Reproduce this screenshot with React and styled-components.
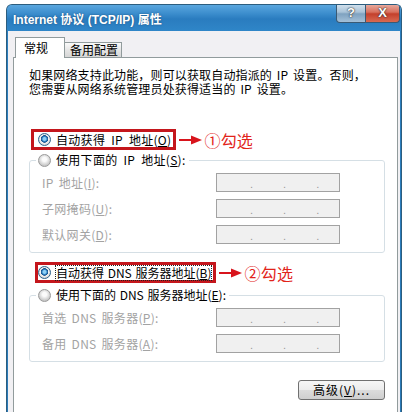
import React from "react";
import styled, { createGlobalStyle } from "styled-components";

const GlobalStyle = createGlobalStyle`
  html, body {
    margin: 0;
    padding: 0;
    background: #ffffff;
    overflow: hidden;
  }
  body {
    font-family: "Noto Sans CJK SC", "Liberation Sans", sans-serif;
    font-size: 12px;
    color: #000;
  }
`;

function App() {
  return (
    <>
      <GlobalStyle />
      <StWindow>
        <StTitleBar>
          <StTitle>Internet 协议 (TCP/IP) 属性</StTitle>
          <StCaptionButtons>
            <StCaptionButton>?</StCaptionButton>
            <StCaptionButton $close>X</StCaptionButton>
          </StCaptionButtons>
        </StTitleBar>

        <StBody>
          {/* 탭 */}
          <StTabs>
            <StTab $active>常规</StTab>
            <StTab>备用配置</StTab>
          </StTabs>

          <StPanel>
            <StIntro>
              <div>如果网络支持此功能，则可以获取自动指派的 IP 设置。否则，</div>
              <div>您需要从网络系统管理员处获得适当的 IP 设置。</div>
            </StIntro>

            {/* IP 주소 */}
            <StMarkRow $top={33}>
              <StHighlight $left={1} $inset={4}>
                <StRadioLabel>
                  <StRadio $checked />
                  <span>
                    自动获得 IP 地址(<u>O</u>)
                  </span>
                </StRadioLabel>
              </StHighlight>
              <Arrow />
              <StNote>①勾选</StNote>
            </StMarkRow>

            <StGroup $top={3}>
              <StLegend>
                <StRadioLabel>
                  <StRadio />
                  <span>
                    使用下面的 IP 地址(<u>S</u>):
                  </span>
                </StRadioLabel>
              </StLegend>
              <StRows>
                <AddressRow label="IP 地址" hotkey="I" />
                <AddressRow label="子网掩码" hotkey="U" />
                <AddressRow label="默认网关" hotkey="D" />
              </StRows>
            </StGroup>

            {/* DNS */}
            <StMarkRow $top={9}>
              <StHighlight $left={5} $inset={0}>
                <StRadioLabel $tight>
                  <StRadio $checked />
                  <StFocus>
                    自动获得 DNS 服务器地址(<u>B</u>)
                  </StFocus>
                </StRadioLabel>
              </StHighlight>
              <Arrow />
              <StNote>②勾选</StNote>
            </StMarkRow>

            <StGroup $top={5}>
              <StLegend>
                <StRadioLabel $tight>
                  <StRadio />
                  <span>
                    使用下面的 DNS 服务器地址(<u>E</u>):
                  </span>
                </StRadioLabel>
              </StLegend>
              <StRows>
                <AddressRow label="首选 DNS 服务器" hotkey="P" />
                <AddressRow label="备用 DNS 服务器" hotkey="A" />
              </StRows>
            </StGroup>

            <StFooter>
              <StButton>
                高级(<u>V</u>)...
              </StButton>
            </StFooter>
          </StPanel>
        </StBody>
      </StWindow>
    </>
  );
}

function AddressRow({ label, hotkey }) {
  return (
    <StRow>
      <StFieldLabel>
        {label}(<u>{hotkey}</u>):
      </StFieldLabel>
      <StAddress>
        <span>.</span>
        <span>.</span>
        <span>.</span>
      </StAddress>
    </StRow>
  );
}

function Arrow() {
  return (
    <StArrow width="24" height="10" viewBox="0 0 24 10">
      <line x1="0" y1="5" x2="13" y2="5" stroke="#d8141c" strokeWidth="2" />
      <polygon points="12,0.5 23,5 12,9.5" fill="#d8141c" />
    </StArrow>
  );
}

export default App;

const StWindow = styled.div`
  margin: 4px 0 0 6px;
  width: 396px;
  height: 420px;
  box-sizing: border-box;
  border: 1px solid #2c5d7e;
  border-bottom: none;
  border-radius: 6px 6px 0 0;
  background: linear-gradient(#4b9ad6, #2b7fc0 20px, #2a7ab8);
  display: flex;
  flex-direction: column;
  overflow: hidden;
`;

const StTitleBar = styled.div`
  height: 26px;
  display: flex;
  align-items: flex-start;
  padding: 0 1px 0 6px;
  background: linear-gradient(
    #5aa6de 0px,
    #3a8ccc 9px,
    #2a7cbf 14px,
    #2f86c8 26px
  );
`;

const StTitle = styled.div`
  margin-top: 8px;
  color: #ffffff;
  font-family: "Liberation Sans", "Noto Sans CJK SC", sans-serif;
  font-weight: bold;
  font-size: 12px;
  line-height: 14px;
  text-shadow: 0 0 2px #1c4f7a;
`;

const StCaptionButtons = styled.div`
  margin-left: auto;
  margin-top: -1px;
  display: flex;
`;

const StCaptionButton = styled.div`
  width: ${(p) => (p.$close ? "34px" : "30px")};
  height: 19px;
  box-sizing: border-box;
  border: 1px solid #3a5a74;
  border-top: none;
  border-left: ${(p) => (p.$close ? "none" : "1px solid #3a5a74")};
  border-radius: ${(p) => (p.$close ? "0 0 4px 0" : "0 0 0 4px")};
  background: ${(p) =>
    p.$close
      ? "linear-gradient(#eab0a4, #d8705e 45%, #c4402c 55%, #d86a52)"
      : "linear-gradient(#d6e4ef, #a9c3d8 45%, #7fa2c0 55%, #a3c0d8)"};
  color: #ffffff;
  font-family: "Liberation Sans", sans-serif;
  font-weight: bold;
  font-size: 13px;
  line-height: 18px;
  text-align: center;
  text-shadow: 0 0 2px #333, 0 0 1px #222;
`;

const StBody = styled.div`
  flex: 1;
  margin: 0 1px;
  padding: 6px 2px 0 5px;
  background: #f1f0f3;
  display: flex;
  flex-direction: column;
`;

const StTabs = styled.div`
  display: flex;
  align-items: flex-end;
  height: 21px;
  margin: 0 0 -1px 2px;
  position: relative;
  z-index: 1;
`;

const StTab = styled.div`
  box-sizing: border-box;
  height: ${(p) => (p.$active ? "21px" : "16px")};
  width: ${(p) => (p.$active ? "50px" : "57px")};
  padding-left: ${(p) => (p.$active ? "8px" : "5px")};
  border: 1px solid #919b9c;
  border-bottom: ${(p) => (p.$active ? "none" : "1px solid #919b9c")};
  border-left: ${(p) => (p.$active ? "1px solid #919b9c" : "none")};
  background: ${(p) =>
    p.$active ? "#ffffff" : "linear-gradient(#fafafa, #e2e2e2 60%, #d6d6d6)"};
  display: flex;
  align-items: center;
  font-size: 12px;
  line-height: 14px;
`;

const StPanel = styled.div`
  flex: 1;
  border: 1px solid #919b9c;
  border-bottom: none;
  background: #ffffff;
  padding: 10px 0 0 16px;
`;

const StIntro = styled.div`
  margin: 0 0 0 -1px;
  font-size: 12px;
  line-height: 14px;
  letter-spacing: 0.15px;
  word-spacing: 2px;
  white-space: nowrap;
`;

const StMarkRow = styled.div`
  display: flex;
  align-items: center;
  margin-top: ${(p) => p.$top}px;
`;

const StHighlight = styled.div`
  box-sizing: border-box;
  height: 21px;
  margin-left: ${(p) => p.$left}px;
  padding: 0 2px 0 ${(p) => p.$inset}px;
  border: 3px solid #c4161c;
  display: flex;
  align-items: center;
`;

const StRadioLabel = styled.label`
  display: flex;
  align-items: center;
  gap: 5px;
  font-size: 12px;
  line-height: 14px;
  letter-spacing: ${(p) => (p.$tight ? "0" : "0.3px")};
  word-spacing: ${(p) => (p.$tight ? "1px" : "3px")};
  white-space: nowrap;
`;

const StRadio = styled.span`
  width: 13px;
  height: 13px;
  box-sizing: border-box;
  border-radius: 50%;
  border: 1px solid ${(p) => (p.$checked ? "#2c628b" : "#9a9a9a")};
  background: ${(p) =>
    p.$checked
      ? "radial-gradient(circle at 50% 45%, #8fd0f5 0 1.5px, #2a7fc2 2.5px, #1b4f86 3.5px, #f4f4f4 4px, #d6d6d6 6px)"
      : "radial-gradient(circle at 50% 40%, #fbfbfb 0 2px, #e2e2e2 4px, #c8c8c8 6px)"};
  flex-shrink: 0;
`;

const StFocus = styled.span`
  outline: 1px dotted #222;
  outline-offset: 0;
`;

const StArrow = styled.svg`
  margin: 0 1px 0 3px;
  flex-shrink: 0;
`;

const StNote = styled.span`
  color: #e2231a;
  font-size: 16px;
  line-height: 18px;
  letter-spacing: 0.2px;
`;

const StGroup = styled.fieldset`
  width: 356px;
  box-sizing: border-box;
  margin: ${(p) => p.$top}px 0 0 -1px;
  padding: 0 0 8px 0;
  border: 1px solid #d5dfe5;
  border-radius: 3px;
  min-width: 0;
`;

const StLegend = styled.legend`
  margin-left: 6px;
  padding: 0 3px 0 2px;
  line-height: 14px;
`;

const StRows = styled.div`
  display: flex;
  flex-direction: column;
  gap: 7px;
  margin-top: 6px;
  padding-left: 12px;
`;

const StRow = styled.div`
  display: grid;
  grid-template-columns: 174px 124px;
  align-items: center;
`;

const StFieldLabel = styled.span`
  color: #a3a3a3;
  font-size: 12px;
  line-height: 14px;
  letter-spacing: 0.3px;
  word-spacing: 2px;
  white-space: nowrap;
`;

const StAddress = styled.div`
  height: 19px;
  box-sizing: border-box;
  border: 1px solid #a2a2a2;
  background: #f0f0f0;
  display: flex;
  align-items: flex-end;
  gap: 30px;
  padding: 0 0 1px 33px;
  color: #9a9a9a;
  font-family: "Liberation Sans", sans-serif;
  font-size: 11px;
  line-height: 12px;
`;

const StFooter = styled.div`
  width: 355px;
  margin-top: 18px;
  display: flex;
  justify-content: flex-end;
`;

const StButton = styled.button`
  width: 87px;
  height: 20px;
  box-sizing: border-box;
  border: 1px solid #707070;
  border-radius: 3px;
  background: linear-gradient(#f6f6f6, #ececec 48%, #dcdcdc 52%, #cfcfcf);
  font-family: "Noto Sans CJK SC", "Liberation Sans", sans-serif;
  font-size: 12px;
  line-height: 14px;
  letter-spacing: 1px;
  color: #000;
  padding: 0;
`;
